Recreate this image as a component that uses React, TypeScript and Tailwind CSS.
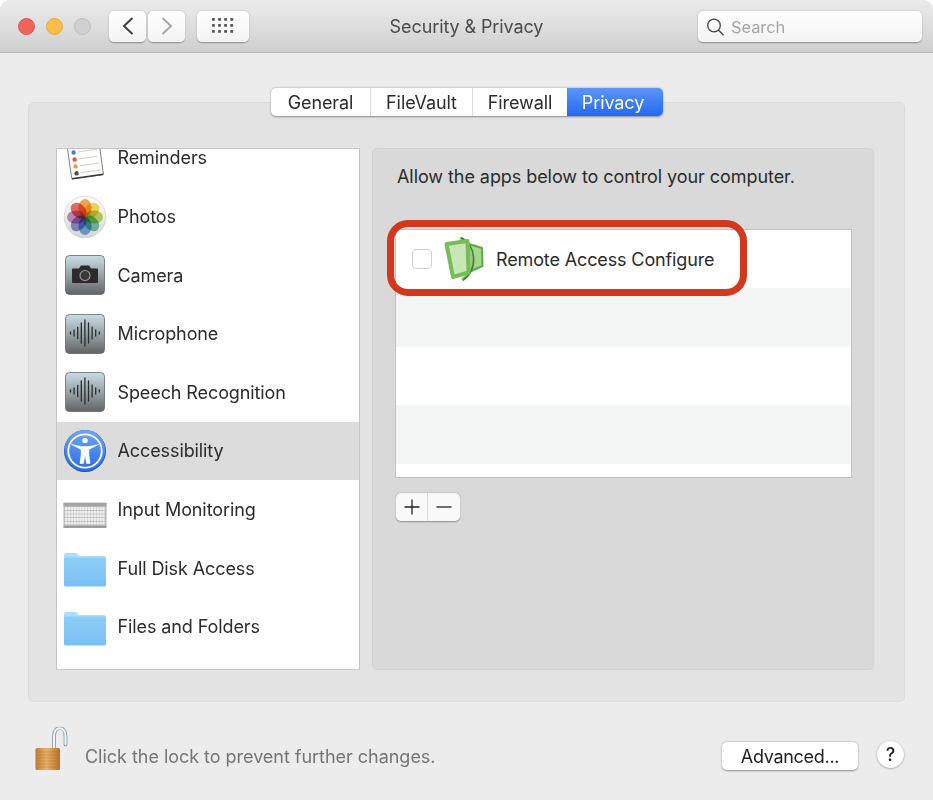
import React from "react";

function Reminders() {
  return (
    <svg width="44" height="44" viewBox="0 0 44 44" className="overflow-visible">
      <g transform="rotate(-8 22 22)">
        <rect x="6" y="-4" width="32" height="45" rx="1.5" fill="#fdfdfb" stroke="#6b6862" strokeWidth="0.8" />
        <rect x="6" y="40" width="32" height="1.5" fill="#3a3a3a" />
        <circle cx="11.5" cy="15" r="2.2" fill="#3d7fe0" />
        <circle cx="11.5" cy="22" r="2.2" fill="#e4553c" />
        <circle cx="11.5" cy="29" r="2.2" fill="#ee9a35" />
        <circle cx="11.5" cy="36" r="2.2" fill="#4a4d50" />
        <path d="M16 8H35M16 15H35M16 22H35M16 29H35M16 36H35" stroke="#c8c8c8" strokeWidth="0.8" />
      </g>
    </svg>
  );
}

function Photos() {
  const petals = ["#f5a03c", "#f6d949", "#b5d25c", "#6fc2a0", "#6aa6dc", "#8d86c8", "#c583bd", "#e8625a"];
  return (
    <svg width="44" height="44" viewBox="0 0 44 44">
      <defs>
        <linearGradient id="ph" x1="0" y1="0" x2="0" y2="1">
          <stop offset="0" stopColor="#ffffff" />
          <stop offset="1" stopColor="#d6d6d6" />
        </linearGradient>
      </defs>
      <circle cx="22" cy="22" r="20.8" fill="url(#ph)" stroke="#c4c4c4" strokeWidth="0.6" />
      {petals.map((c, i) => (
        <ellipse key={i} cx="22" cy="13" rx="6.6" ry="9" fill={c} fillOpacity="0.92" transform={`rotate(${i * 45} 22 22)`} style={{ mixBlendMode: "multiply" }} />
      ))}
    </svg>
  );
}

function Tile({ id, children }: { id: string; children: React.ReactNode }) {
  return (
    <svg width="44" height="44" viewBox="0 0 44 44">
      <defs>
        <linearGradient id={id} x1="0" y1="0" x2="0" y2="1">
          <stop offset="0" stopColor="#c9dde4" />
          <stop offset="0.55" stopColor="#939ea2" />
          <stop offset="1" stopColor="#626364" />
        </linearGradient>
      </defs>
      <rect x="2.5" y="2.5" width="39" height="39" rx="4" fill={`url(#${id})`} stroke="#5f6972" strokeWidth="0.8" />
      {children}
    </svg>
  );
}

function Camera() {
  return (
    <Tile id="cam">
      <path d="M10 15.5h6l2-3h8l2 3h6a1 1 0 0 1 1 1V29a1 1 0 0 1-1 1H10a1 1 0 0 1-1-1V16.5a1 1 0 0 1 1-1z" fill="#2b2b2b" />
      <circle cx="22" cy="22.5" r="5" fill="#3a3a3a" stroke="#9b9b9b" strokeWidth="1.1" />
    </Tile>
  );
}

function Mic({ id }: { id: string }) {
  const hs = [1, 3, 5.5, 10, 13, 10, 6, 3, 1];
  return (
    <Tile id={id}>
      {hs.map((h, i) => (
        <line key={i} x1={7.5 + i * 3.6} x2={7.5 + i * 3.6} y1={21 - h} y2={21 + h} stroke="#2a2c2e" strokeWidth="1.3" strokeLinecap="round" />
      ))}
    </Tile>
  );
}

function Access() {
  return (
    <svg width="44" height="44" viewBox="0 0 44 44">
      <defs>
        <linearGradient id="acc" x1="0" y1="0" x2="0" y2="1">
          <stop offset="0" stopColor="#6ea6f4" />
          <stop offset="1" stopColor="#2a6ce0" />
        </linearGradient>
      </defs>
      <circle cx="22" cy="22" r="21" fill="#1a4fb4" />
      <circle cx="22" cy="21.5" r="20.5" fill="url(#acc)" />
      <circle cx="22" cy="22" r="16.7" fill="none" stroke="#fff" strokeWidth="1.8" />
      <circle cx="22" cy="11.5" r="2.7" fill="#fff" />
      <path d="M8.5 15.5 L18 17.5 H26 L35.5 15.5 L25.8 20.5 L25.8 25 L27 34.5 L23.6 34.5 L22 26 L20.4 34.5 L17 34.5 L18.2 25 L18.2 20.5 Z" fill="#fff" stroke="#fff" strokeWidth="0.6" strokeLinejoin="round" />
    </svg>
  );
}

function Keyboard() {
  const keys: React.ReactNode[] = [];
  for (let r = 0; r < 5; r++) {
    for (let c = 0; c < 14; c++) {
      keys.push(<rect key={`${r}-${c}`} x={2 + c * 3} y={20 + r * 3.8} width="2.6" height="3.1" rx="0.4" fill="#efefef" />);
    }
  }
  return (
    <svg width="46" height="44" viewBox="0 0 46 44">
      <rect x="0.5" y="15.5" width="45" height="26" rx="1" fill="#b8b8b8" />
      <rect x="0.5" y="15.5" width="45" height="3.5" fill="#a4a4a4" />
      <rect x="0.5" y="40" width="45" height="1.6" fill="#8f8f8f" />
      {keys}
    </svg>
  );
}

function Folder({ id }: { id: string }) {
  return (
    <svg width="44" height="44" viewBox="0 0 44 44">
      <defs>
        <linearGradient id={id} x1="0" y1="0" x2="0" y2="1">
          <stop offset="0" stopColor="#8ccdf8" />
          <stop offset="1" stopColor="#7cc1f5" />
        </linearGradient>
      </defs>
      <path d="M1 9a2 2 0 0 1 2-2h10l3 3h25a2 2 0 0 1 2 2V15H1z" fill="#a8defc" />
      <rect x="1" y="11.5" width="42" height="29" rx="1.5" fill={`url(#${id})`} />
      <path d="M1.5 36H42.5M1.5 38.5H42.5" stroke="#6fb5ec" strokeWidth="0.5" />
    </svg>
  );
}

function AppIcon() {
  return (
    <svg width="40" height="44" viewBox="0 0 40 44">
      <path d="M25 7 L38 11 L38.5 29 L25 35 Z" fill="#a6d58c" stroke="#5fa845" strokeWidth="2" strokeLinejoin="round" />
      <path d="M16 0.8 C31 8 33 32 18 43.2" fill="none" stroke="#9bc889" strokeWidth="3.4" />
      <path d="M17 0.8 C32.5 8 34.5 32 19 43.2" fill="none" stroke="#3f8531" strokeWidth="1.6" />
      <path d="M2.5 7 L23.5 4 L24.5 35.5 L9 40 Z" fill="#c9e7b6" stroke="#76bd58" strokeWidth="4" strokeLinejoin="round" />
    </svg>
  );
}

function Lock() {
  return (
    <svg width="40" height="48" viewBox="0 0 40 48">
      <defs>
        <linearGradient id="bd" x1="0" y1="0" x2="1" y2="0">
          <stop offset="0" stopColor="#bd7c30" />
          <stop offset="0.45" stopColor="#ecb26a" />
          <stop offset="1" stopColor="#b57227" />
        </linearGradient>
      </defs>
      <path d="M23 22 V9 C23 -1.5 34.5 -1.5 34.5 9 V17.5" fill="none" stroke="#8f9ea9" strokeWidth="3.8" strokeLinecap="round" />
      <path d="M23 22 V9 C23 -1.5 34.5 -1.5 34.5 9 V17.5" fill="none" stroke="#f2f5f7" strokeWidth="2" strokeLinecap="round" />
      <rect x="4.5" y="21" width="24.5" height="22" rx="1.5" fill="url(#bd)" />
      <path d="M5 25H29M5 28H29M5 31H29M5 34H29M5 37H29M5 40H29" stroke="#a5682a" strokeWidth="0.6" opacity="0.6" />
    </svg>
  );
}

const items: [string, React.ReactNode][] = [
  ["Reminders", <Reminders />],
  ["Photos", <Photos />],
  ["Camera", <Camera />],
  ["Microphone", <Mic id="m1" />],
  ["Speech Recognition", <Mic id="m2" />],
  ["Accessibility", <Access />],
  ["Input Monitoring", <Keyboard />],
  ["Full Disk Access", <Folder id="f1" />],
  ["Files and Folders", <Folder id="f2" />],
];

const toolbarBtn = "flex h-[31px] items-center justify-center rounded-[5px] bg-gradient-to-b from-white to-[#f3f3f3] shadow-[0_0.5px_1.5px_rgba(0,0,0,0.35)]";

export default function App() {
  return (
    <div className="flex h-[800px] w-[933px] flex-col overflow-hidden rounded-t-[10px] bg-[#ececec] font-['Inter','Liberation_Sans',sans-serif] text-[18px] tracking-[-0.1px] text-[#2b2b2b]">
      <header className="relative flex h-[53px] shrink-0 items-center border-b border-[#b8b8b8] bg-gradient-to-b from-[#ebebeb] to-[#d0d0d0] pl-[18px] pr-[11px]">
        <div className="flex gap-[11px]">
          <span className="h-[17px] w-[17px] rounded-full border border-[#e0564f] bg-[#f1645c]" />
          <span className="h-[17px] w-[17px] rounded-full border border-[#e5ac3a] bg-[#f7bf47]" />
          <span className="h-[17px] w-[17px] rounded-full border border-[#bdbdbd] bg-[#d0d0d0]" />
        </div>
        <div className="ml-[18px] flex gap-[2px]">
          <button className={`${toolbarBtn} w-[37px]`}>
            <svg width="14" height="20" viewBox="0 0 14 20"><path d="M11.5 2 L3 10 L11.5 18" fill="none" stroke="#3f3f3f" strokeWidth="2" /></svg>
          </button>
          <button className={`${toolbarBtn} w-[37px]`}>
            <svg width="14" height="20" viewBox="0 0 14 20"><path d="M2.5 2 L11 10 L2.5 18" fill="none" stroke="#a8a8a8" strokeWidth="2" /></svg>
          </button>
        </div>
        <button className={`${toolbarBtn} ml-[12px] w-[52px]`}>
          <svg width="22" height="16" viewBox="0 0 22 16" fill="#555">
            {[0, 1, 2].map((r) => [0, 1, 2, 3].map((c) => <rect key={`${r}${c}`} x={c * 6.1} y={r * 6} width="2.8" height="2.8" rx="0.6" />))}
          </svg>
        </button>
        <h1 className="absolute left-0 right-0 pt-[1px] text-center text-[18px] text-[#4b4b4b]">Security &amp; Privacy</h1>
        <div className={`${toolbarBtn} ml-auto w-[224px] !justify-start pl-[8px]`}>
          <svg width="19" height="20" viewBox="0 0 19 20" fill="none" stroke="#444" strokeWidth="1.3" className="mt-[1px]"><circle cx="8" cy="8.5" r="6.3" /><path d="M12.6 13.2 L17.6 18.2" /></svg>
          <span className="ml-[6px] pt-[2px] text-[16.5px] text-[#a5a5a5]">Search</span>
        </div>
      </header>

      <main className="mx-[28px] mt-[49px] h-[600px] shrink-0 rounded-[5px] border border-[#dcdcdc] bg-[#e3e3e3]">
        <div className="-mt-[15px] flex justify-center pl-[1px]">
          <div className="flex h-[28px] overflow-hidden rounded-[5px] bg-white shadow-[0_0.5px_2px_rgba(0,0,0,0.4)]">
            <div className="flex w-[100px] items-center justify-center border-r border-[#dcdcdc]">General</div>
            <div className="flex w-[102px] items-center justify-center border-r border-[#dcdcdc]">FileVault</div>
            <div className="flex w-[94px] items-center justify-center">Firewall</div>
            <div className="flex w-[96px] items-center justify-center bg-gradient-to-b from-[#5b96f8] to-[#2467ee] pr-[4px] text-white">Privacy</div>
          </div>
        </div>
        <div className="mt-[32px] flex gap-[12px] pl-[28px]">
          <div className="-ml-[1px] h-[522px] w-[304px] overflow-hidden border border-[#c6c6c6] bg-white">
            <div className="-mt-[20.4px]">
              {items.map(([label, icon]) => (
                <div key={label} className={`flex h-[58.6px] items-center pl-[6px] ${label === "Accessibility" ? "bg-[#dcdcdc]" : ""}`}>
                  <span className="flex w-[44px] shrink-0 items-center justify-center">{icon}</span>
                  <span className="ml-[10.5px] whitespace-nowrap">{label}</span>
                </div>
              ))}
            </div>
          </div>

          <section className="h-[522px] w-[502px] rounded-[5px] border border-[#d2d2d2] bg-[#d9d9d9] pl-[22px] pt-[16px]">
            <p className="pl-[2px] leading-[24px] tracking-[-0.065px]">Allow the apps below to control your computer.</p>
            <div className="relative mt-[40px] h-[249px] w-[457px] border border-[#c2c2c2] bg-white">
              <div className="flex h-[58px] items-center">
                <span className="ml-[16px] h-[20px] w-[20px] rounded-[4px] border border-[#cfcfcf] bg-white" />
                <span className="ml-[12px] flex"><AppIcon /></span>
                <span className="ml-[12px] tracking-[-0.13px]">Remote Access Configure</span>
              </div>
              <div className="h-[58.6px] bg-[#f4f5f5]" />
              <div className="h-[58.6px]" />
              <div className="h-[58.6px] bg-[#f4f5f5]" />
              <div className="pointer-events-none absolute -left-[9px] -top-[10px] h-[76px] w-[360px] rounded-[21px] border-[7.5px] border-[#d1381d]" />
            </div>
            <div className="ml-[1px] mt-[15px] flex h-[28px] w-[64px] rounded-[5px] bg-[#f9f9f9] shadow-[0_0.5px_1.5px_rgba(0,0,0,0.35)]">
              <span className="flex w-[32px] items-center justify-center border-r border-[#dcdcdc]">
                <svg width="16" height="16" viewBox="0 0 16 16"><path d="M8 0.5V15.5M0.5 8H15.5" stroke="#222" strokeWidth="1.3" /></svg>
              </span>
              <span className="flex w-[32px] items-center justify-center">
                <svg width="16" height="16" viewBox="0 0 16 16"><path d="M0.5 8H15.5" stroke="#222" strokeWidth="1.3" /></svg>
              </span>
            </div>
          </section>
        </div>
      </main>

      <footer className="mt-[25px] flex items-start">
        <span className="ml-[31px] flex"><Lock /></span>
        <span className="ml-[14px] mt-[18px] leading-[24px] tracking-[-0.03px] text-[#757575]">Click the lock to prevent further changes.</span>
        <button className="ml-auto mt-[15px] h-[28px] w-[136px] rounded-[5px] bg-white tracking-[-0.3px] text-[#222] shadow-[0_0.5px_2px_rgba(0,0,0,0.4)]">Advanced...</button>
        <button className="ml-[19px] mr-[29px] mt-[14px] flex h-[27px] w-[27px] items-center justify-center rounded-full bg-white font-medium text-[#222] shadow-[0_0.5px_2px_rgba(0,0,0,0.4)]">?</button>
      </footer>
    </div>
  );
}
